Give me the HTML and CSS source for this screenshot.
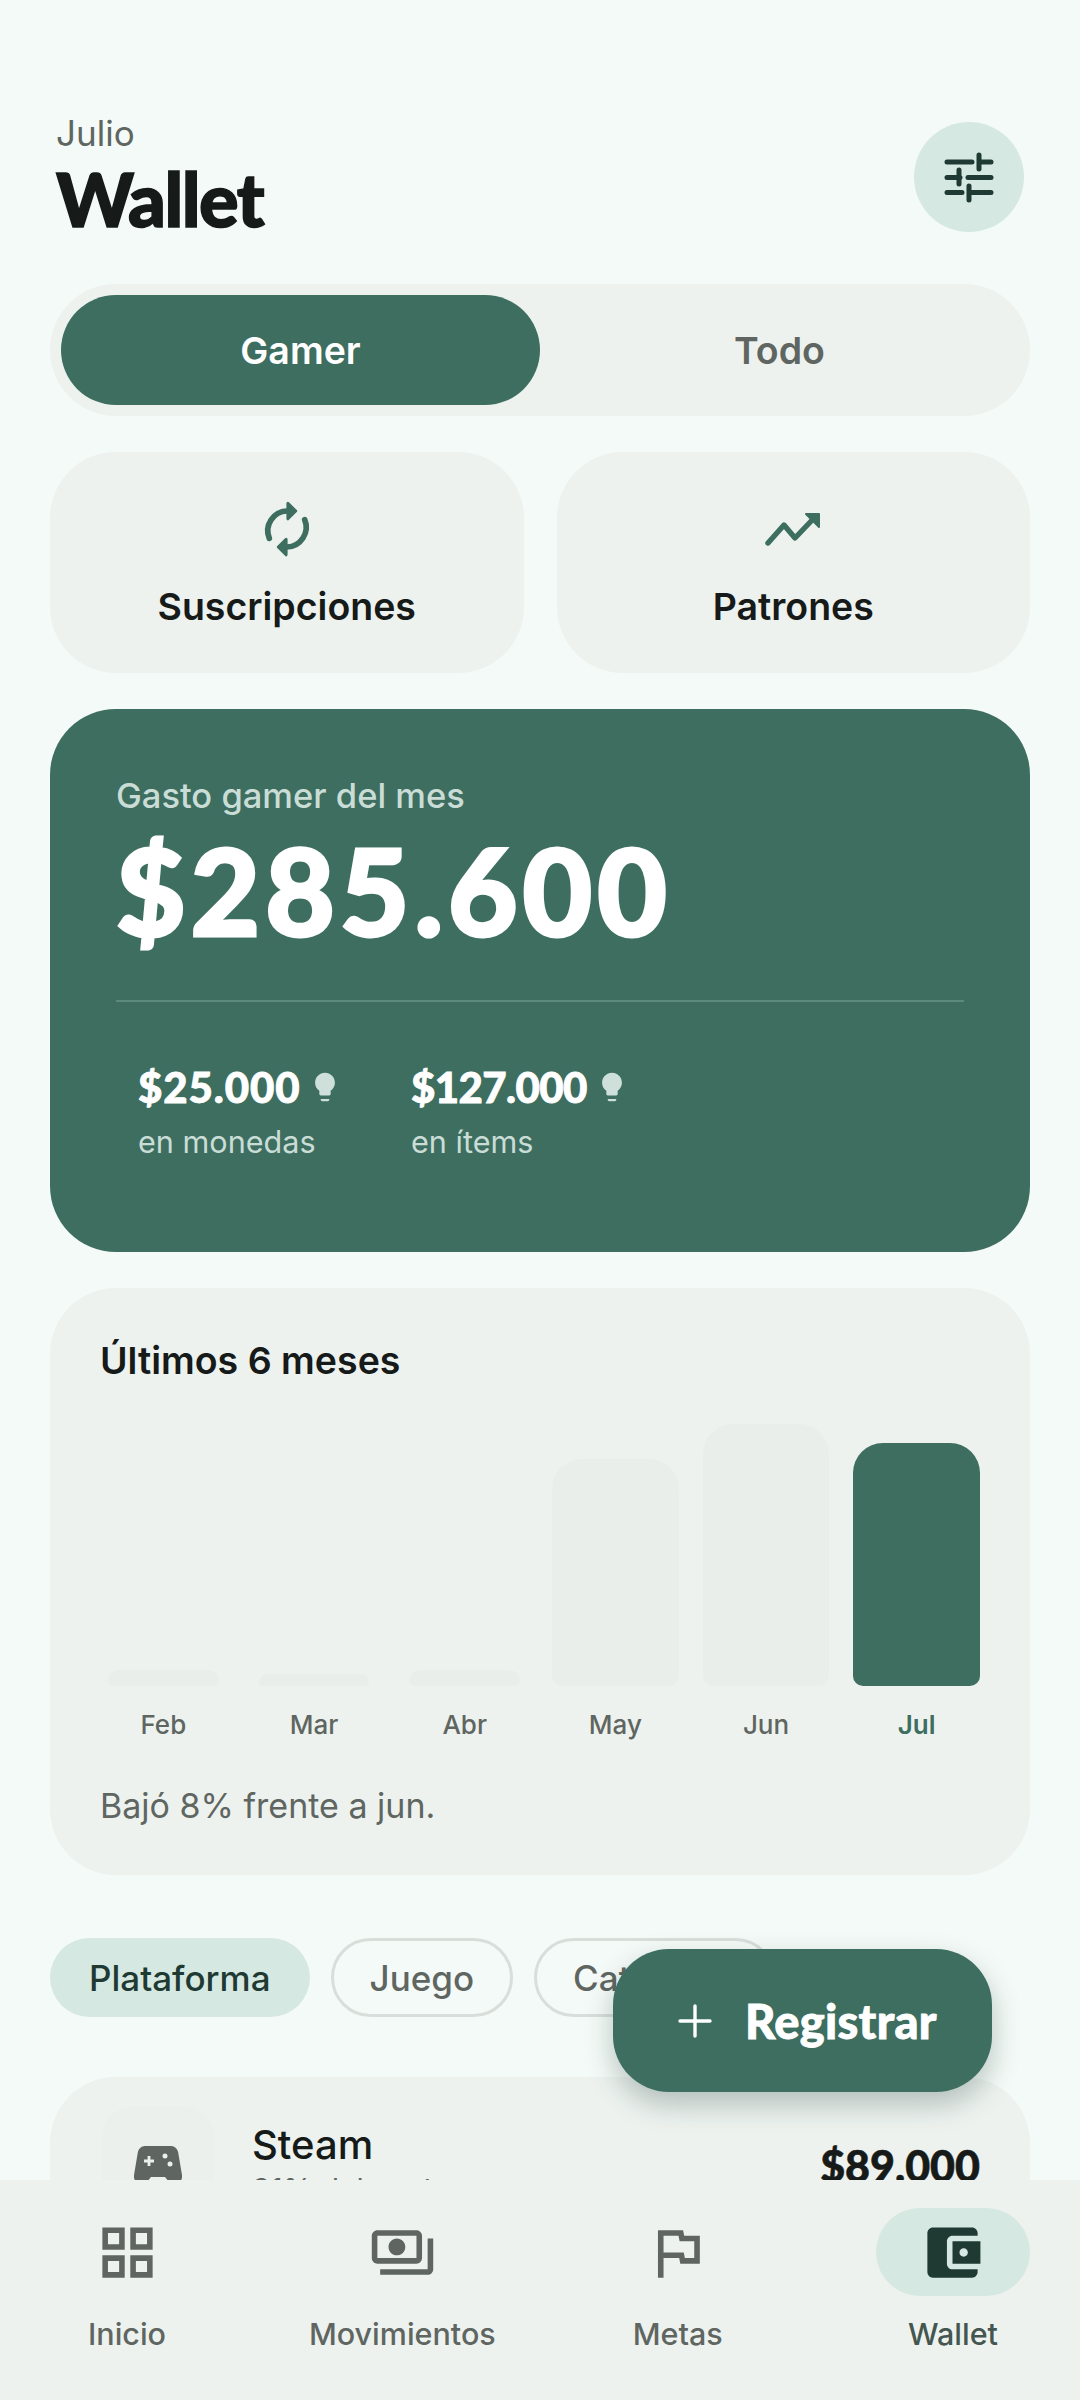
FILE: index.html
```html
<!DOCTYPE html>
<html lang="es">

<head>
    <meta charset="UTF-8">
    <meta name="viewport" content="width=device-width, initial-scale=1.0">
    <title>Wallet</title>
    <link rel="stylesheet" href="styles.css">
</head>

<body>
    <div class="page">
        <div class="content">
            <div class="header">
                <div>
                    <div class="header-month">Julio</div>
                    <div class="header-title">Wallet</div>
                </div>
                <div class="filter-btn">
                    <svg viewBox="0 0 60 60" width="60" height="60" fill="none" stroke="#1e3a33" stroke-width="5" stroke-linecap="round">
                        <path d="M8 15h25M40 8v14M40 15h12M8 30.5h13M20 23v14M29 30.5h23M8 45.5h15M30 39v14M30 45.5h22" />
                    </svg>
                </div>
            </div>

            <div class="segment">
                <div class="segment-item active">Gamer</div>
                <div class="segment-item">Todo</div>
            </div>

            <div class="shortcuts">
                <div class="shortcut">
                    <svg viewBox="0 0 24 24" width="72" height="72" fill="none" stroke="#3d6e60" stroke-width="1.9" stroke-linecap="round" stroke-linejoin="round">
                        <path d="M6.1 15.1A6.6 6.6 0 0 1 12 6" />
                        <path d="M17.9 8.9A6.6 6.6 0 0 1 12 18" />
                        <path d="M12.3 3.4 14.9 6l-2.6 2.6zM11.7 15.4 9.1 18l2.6 2.6z" fill="#3d6e60" stroke-width="1" />
                    </svg>
                    <span>Suscripciones</span>
                </div>
                <div class="shortcut">
                    <svg viewBox="0 0 72 72" width="72" height="72" fill="none" stroke="#3d6e60" stroke-width="5.4" stroke-linecap="round" stroke-linejoin="round">
                        <path d="M11 50 27 32l11 13 21-22" />
                        <path d="M49 21h13v13z" fill="#3d6e60" stroke-width="2" />
                    </svg>
                    <span>Patrones</span>
                </div>
            </div>

            <div class="hero">
                <div class="hero-label">Gasto gamer del mes</div>
                <div class="hero-amount">$285.600</div>
                <div class="hero-line"></div>
                <div class="hero-stats">
                    <div class="stat">
                        <div class="stat-value">$25.000
                            <svg viewBox="0 0 24 24" width="34" height="34" fill="#cfe0db">
                                <path d="M9 21c0 .5.4 1 1 1h4c.6 0 1-.5 1-1v-.6H9zM12 2C8.1 2 5 5.1 5 9c0 2.4 1.2 4.5 3 5.7V17c0 .5.4 1 1 1h6c.6 0 1-.5 1-1v-2.3c1.8-1.3 3-3.4 3-5.7 0-3.9-3.1-7-7-7z" />
                            </svg>
                        </div>
                        <div class="stat-label">en monedas</div>
                    </div>
                    <div class="stat">
                        <div class="stat-value narrow">$127.000
                            <svg viewBox="0 0 24 24" width="34" height="34" fill="#cfe0db">
                                <path d="M9 21c0 .5.4 1 1 1h4c.6 0 1-.5 1-1v-.6H9zM12 2C8.1 2 5 5.1 5 9c0 2.4 1.2 4.5 3 5.7V17c0 .5.4 1 1 1h6c.6 0 1-.5 1-1v-2.3c1.8-1.3 3-3.4 3-5.7 0-3.9-3.1-7-7-7z" />
                            </svg>
                        </div>
                        <div class="stat-label">en ítems</div>
                    </div>
                </div>
            </div>

            <div class="chart-card">
                <div class="chart-title">Últimos 6 meses</div>
                <div class="chart">
                    <div class="chart-col">
                        <div class="bar-area"><div class="bar low" style="height: 16px"></div></div>
                        <div class="bar-label">Feb</div>
                    </div>
                    <div class="chart-col">
                        <div class="bar-area"><div class="bar low" style="height: 12px"></div></div>
                        <div class="bar-label">Mar</div>
                    </div>
                    <div class="chart-col">
                        <div class="bar-area"><div class="bar low" style="height: 16px"></div></div>
                        <div class="bar-label">Abr</div>
                    </div>
                    <div class="chart-col">
                        <div class="bar-area"><div class="bar" style="height: 227px"></div></div>
                        <div class="bar-label">May</div>
                    </div>
                    <div class="chart-col">
                        <div class="bar-area"><div class="bar" style="height: 262px"></div></div>
                        <div class="bar-label">Jun</div>
                    </div>
                    <div class="chart-col current">
                        <div class="bar-area"><div class="bar" style="height: 243px"></div></div>
                        <div class="bar-label">Jul</div>
                    </div>
                </div>
                <div class="chart-note">Bajó 8% frente a jun.</div>
            </div>

            <div class="chips">
                <div class="chip active">Plataforma</div>
                <div class="chip">Juego</div>
                <div class="chip">Categoría</div>
            </div>

            <div class="list-card">
                <div class="list-row">
                    <div class="list-icon">
                        <svg viewBox="0 0 48 48" width="48" height="48">
                            <path d="M11 0h26c4 0 6.500 3 7.200 6.500L48 29c.8 5-3 9-7.500 9-2.500 0-4.500-1-6-2.800L31 31H17l-3.500 4.200C12 37 10 38 7.500 38 3 38-.8 34 0 29L3.800 6.500C4.500 3 7 0 11 0z" fill="#5f6661" />
                            <path d="M15 10v10M10 15h10" stroke="#ebf0ed" stroke-width="2.800" />
                            <circle cx="31" cy="10" r="2.500" fill="#ebf0ed" />
                            <circle cx="36" cy="18" r="2.500" fill="#ebf0ed" />
                        </svg>
                    </div>
                    <div class="list-text">
                        <div class="list-name">Steam</div>
                        <div class="list-sub">31% del gasto</div>
                    </div>
                    <div class="list-amount">$89.000</div>
                </div>
            </div>
        </div>

        <div class="fab">
            <svg viewBox="0 0 34 34" width="34" height="34" fill="none" stroke="#fff" stroke-width="3.400" stroke-linecap="round">
                <path d="M17 2v30M2 17h30" />
            </svg>
            <span>Registrar</span>
        </div>

        <div class="nav">
            <div class="nav-item">
                <div class="nav-icon">
                    <svg viewBox="0 0 24 24" width="67" height="67" fill="#5f6661">
                        <path d="M3 3v8h8V3H3zm6 6H5V5h4v4zm-6 4v8h8v-8H3zm6 6H5v-4h4v4zm4-16v8h8V3h-8zm6 6h-4V5h4v4zm-6 4v8h8v-8h-8zm6 6h-4v-4h4v4z" />
                    </svg>
                </div>
                <div class="nav-label">Inicio</div>
            </div>
            <div class="nav-item">
                <div class="nav-icon">
                    <svg viewBox="0 0 24 24" width="67" height="67" fill="#5f6661">
                        <path d="M19 14V6c0-1.100-.9-2-2-2H3c-1.100 0-2 .9-2 2v8c0 1.100.9 2 2 2h14c1.100 0 2-.9 2-2zm-2 0H3V6h14v8zm-7-7c-1.660 0-3 1.340-3 3s1.340 3 3 3 3-1.340 3-3-1.340-3-3-3zm13 0v11c0 1.100-.9 2-2 2H4v-2h17V7h2z" />
                    </svg>
                </div>
                <div class="nav-label">Movimientos</div>
            </div>
            <div class="nav-item">
                <div class="nav-icon">
                    <svg viewBox="0 0 24 24" width="67" height="67" fill="#5f6661">
                        <path d="M12.360 6l.4 2H18v6h-3.360l-.4-2H7V6h5.360M14 4H5v17h2v-7h5.600l.4 2h7V6h-5.600L14 4z" />
                    </svg>
                </div>
                <div class="nav-label">Metas</div>
            </div>
            <div class="nav-item current">
                <div class="nav-icon">
                    <svg viewBox="0 0 24 24" width="67" height="67" fill="#1e3a33">
                        <path d="M21 18v1c0 1.100-.9 2-2 2H5c-1.110 0-2-.9-2-2V5c0-1.100.89-2 2-2h14c1.100 0 2 .9 2 2v1h-9c-1.110 0-2 .9-2 2v8c0 1.100.89 2 2 2h9zm-9-2h10V8H12v8zm4-2.500c-.83 0-1.500-.67-1.500-1.500s.67-1.500 1.500-1.500 1.500.67 1.500 1.500-.67 1.500-1.500 1.500z" />
                    </svg>
                </div>
                <div class="nav-label">Wallet</div>
            </div>
        </div>
    </div>
</body>

</html>
```

FILE: styles.css
```css
* {
    box-sizing: border-box;
}

body {
    margin: 0;
    font-family: "Inter", "Liberation Sans", sans-serif;
    color: #161a18;
    background: #f4faf7;
}

.page {
    position: relative;
    width: 1080px;
    height: 2400px;
    overflow: hidden;
    background: #f4faf7;
}

.content {
    padding: 111px 50px 0;
}

.header {
    display: flex;
    justify-content: space-between;
    align-items: center;
    padding: 0 6px 0 6px;
}

.header-month {
    font-size: 35px;
    line-height: 44px;
    color: #5f6661;
}

.header-title {
    font-family: "Lato", sans-serif;
    font-weight: 900;
    font-size: 74px;
    line-height: 88px;
    letter-spacing: -1.5px;
    -webkit-text-stroke: 1.5px #161a18;
    color: #161a18;
}

.filter-btn {
    width: 110px;
    height: 110px;
    border-radius: 50%;
    background: #d6e8e2;
    display: flex;
    align-items: center;
    justify-content: center;
}

.segment {
    display: flex;
    height: 132px;
    margin-top: 41px;
    padding: 11px;
    border-radius: 66px;
    background: #edf2ef;
}

.segment-item {
    flex: 1;
    display: flex;
    align-items: center;
    justify-content: center;
    border-radius: 55px;
    font-weight: 600;
    font-size: 37.5px;
    color: #5f6661;
}

.segment-item.active {
    flex: none;
    width: 479px;
    background: #3d6e60;
    color: #fff;
}

.shortcuts {
    display: flex;
    gap: 33px;
    margin-top: 36px;
}

.shortcut {
    flex: 1;
    height: 221px;
    padding-top: 41px;
    border-radius: 66px;
    background: #edf2ef;
    display: flex;
    flex-direction: column;
    align-items: center;
    font-weight: 600;
    font-size: 37.5px;
}

.shortcut span {
    margin-top: 19px;
}

.hero {
    margin-top: 36px;
    padding: 65px 66px 90px;
    border-radius: 66px;
    background: #3d6e60;
    color: #fff;
}

.hero-label {
    font-weight: 500;
    font-size: 34.5px;
    line-height: 44px;
    color: #c9ddd6;
}

.hero-amount {
    margin-top: 7px;
    font-family: "Lato", sans-serif;
    font-weight: 900;
    font-size: 120px;
    line-height: 130px;
    letter-spacing: 5px;
    -webkit-text-stroke: 3px #fff;
}

.hero-line {
    height: 2px;
    margin-top: 45px;
    background: #5c8a7c;
}

.hero-stats {
    display: flex;
    margin-top: 58px;
    padding-left: 22px;
}

.stat:first-child {
    width: 273px;
}

.stat-value {
    display: flex;
    align-items: center;
    gap: 8px;
    font-family: "Lato", sans-serif;
    font-weight: 900;
    font-size: 42px;
    line-height: 54px;
    letter-spacing: 0.9px;
    -webkit-text-stroke: 0.8px #fff;
}

.stat-value.narrow {
    letter-spacing: -0.6px;
}

.stat-label {
    margin-top: 8px;
    font-size: 30.6px;
    line-height: 40px;
    color: #c9ddd6;
}

.chart-card {
    margin-top: 36px;
    padding: 51px 50px 48px;
    border-radius: 66px;
    background: #edf2ef;
}

.chart-title {
    font-weight: 600;
    font-size: 37.5px;
    line-height: 44px;
}

.chart {
    display: flex;
    gap: 24px;
    margin-top: 41px;
}

.chart-col {
    flex: 1;
    min-width: 0;
}

.bar-area {
    height: 262px;
    display: flex;
    align-items: flex-end;
}

.bar {
    width: 100%;
    border-radius: 30px 30px 10px 10px;
    background: #eaeeeb;
}

.bar.low {
    margin: 0 8px;
    border-radius: 14px 14px 6px 6px;
}

.chart-col.current .bar {
    background: #3d6e60;
}

.bar-label {
    margin-top: 23px;
    text-align: center;
    font-weight: 500;
    font-size: 26px;
    line-height: 32px;
    color: #5f6661;
}

.chart-col.current .bar-label {
    font-weight: 600;
    color: #3d6e60;
}

.chart-note {
    margin-top: 44px;
    font-size: 34px;
    line-height: 42px;
    color: #5f6661;
}

.chips {
    display: flex;
    gap: 21px;
    margin-top: 63px;
}

.chip {
    height: 79px;
    padding: 0 36px;
    display: flex;
    align-items: center;
    border: 3px solid #d9dedb;
    border-radius: 40px;
    font-weight: 500;
    font-size: 35px;
    color: #5f6661;
}

.chip.active {
    padding: 0 39px;
    border: none;
    background: #d6e8e2;
    color: #1e3a33;
}

.list-card {
    height: 320px;
    margin-top: 60px;
    padding: 30px 50px 0 52px;
    border-radius: 66px;
    background: #edf2ef;
}

.list-row {
    display: flex;
    align-items: center;
    height: 110px;
}

.list-icon {
    width: 112px;
    height: 110px;
    padding-top: 39px;
    border-radius: 30px;
    background: #ebf0ed;
    display: flex;
    justify-content: center;
}

.list-text {
    flex: 1;
    margin-left: 38px;
    padding-top: 6px;
}

.list-name {
    font-weight: 500;
    font-size: 40px;
    line-height: 48px;
}

.list-sub {
    font-size: 30px;
    line-height: 40px;
    color: #5f6661;
}

.list-amount {
    padding-top: 6px;
    font-family: "Lato", sans-serif;
    font-weight: 900;
    font-size: 43px;
    -webkit-text-stroke: 0.6px #161a18;
}

.fab {
    position: absolute;
    left: 613px;
    top: 1949px;
    width: 379px;
    height: 143px;
    padding-left: 65px;
    border-radius: 56px;
    background: #3d6e60;
    box-shadow: 0 12px 28px rgba(30, 58, 51, 0.28);
    display: flex;
    align-items: center;
    gap: 33px;
    color: #fff;
    font-family: "Lato", sans-serif;
    font-weight: 900;
    font-size: 47px;
    letter-spacing: 0.3px;
    -webkit-text-stroke: 0.8px #fff;
}

.nav {
    position: absolute;
    left: 0;
    bottom: 0;
    width: 1080px;
    height: 220px;
    padding: 28px 50px 0;
    background: #edf2ef;
    display: flex;
    justify-content: space-between;
}

.nav-item {
    width: 154px;
    display: flex;
    flex-direction: column;
    align-items: center;
}

.nav-icon {
    width: 154px;
    height: 88px;
    border-radius: 44px;
    display: flex;
    align-items: center;
    justify-content: center;
}

.nav-item.current .nav-icon {
    background: #d6e8e2;
}

.nav-label {
    margin-top: 16px;
    font-weight: 500;
    font-size: 30.5px;
    line-height: 44px;
    white-space: nowrap;
    color: #5f6661;
}

.nav-item.current .nav-label {
    color: #44564f;
}
```
